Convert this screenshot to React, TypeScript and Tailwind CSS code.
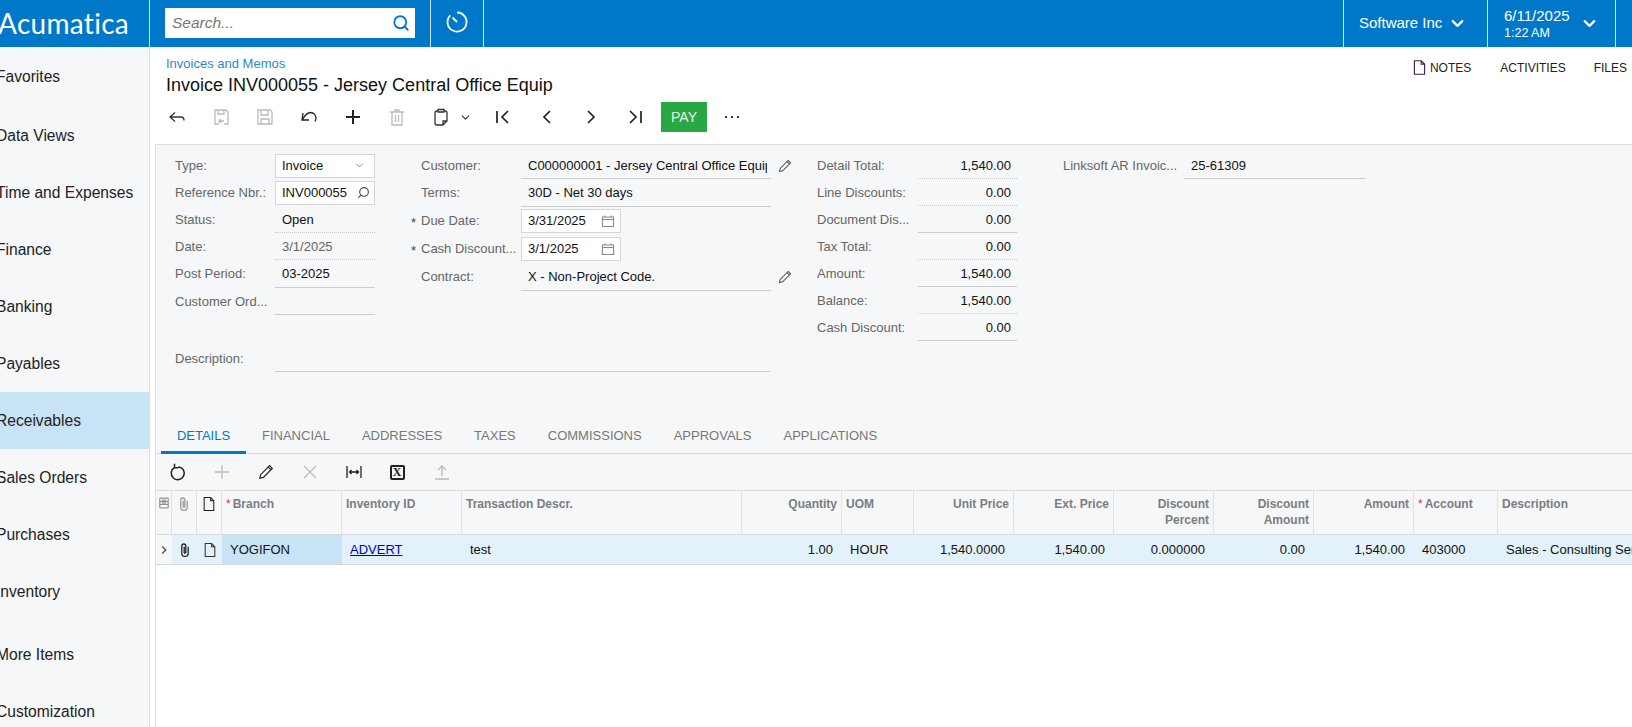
import type { ReactNode } from "react";
import { ChevronDown, Search } from "lucide-react";

const NAV_ITEMS = [
  "Favorites",
  "Data Views",
  "Time and Expenses",
  "Finance",
  "Banking",
  "Payables",
  "Receivables",
  "Sales Orders",
  "Purchases",
  "Inventory",
];

const TABS = ["DETAILS", "FINANCIAL", "ADDRESSES", "TAXES", "COMMISSIONS", "APPROVALS", "APPLICATIONS"];

function Icon({ children, className = "text-[#333]", size = 20 }: { children: ReactNode; className?: string; size?: number }) {
  return (
    <svg width={size} height={size} viewBox="0 0 20 20" fill="none" stroke="currentColor" strokeWidth="1.3" className={className}>
      {children}
    </svg>
  );
}

function ToolButton({ children }: { children: ReactNode }) {
  return <div className="flex h-[30px] w-[44px] shrink-0 items-center justify-center">{children}</div>;
}

function PageIcon({ className = "text-[#222]", size = 16 }: { className?: string; size?: number }) {
  return (
    <Icon className={className} size={size}>
      <path d="M4 2h8l4 4v12H4z M12 2v4h4" />
    </Icon>
  );
}

function ClipIcon({ className }: { className: string }) {
  return (
    <Icon className={className} size={16}>
      <path d="M14 6v8a4 4 0 0 1-8 0V5a2.500 2.500 0 0 1 5 0v8a1 1 0 0 1-2 0V6" strokeWidth="1.6" />
    </Icon>
  );
}

function Pencil({ className = "text-[#555]", size = 16 }: { className?: string; size?: number }) {
  return (
    <Icon className={className} size={size}>
      <path d="M3 17l1-4L14 3l3 3L7 16z M12.500 4.500l3 3" />
    </Icon>
  );
}

function CalendarIcon() {
  return (
    <Icon className="text-[#888]" size={16}>
      <path d="M3 5h14v12H3z M3 8h14 M6 3v2 M14 3v2" />
    </Icon>
  );
}

function Label({ text, star, className = "w-[100px]" }: { text: string; star?: boolean; className?: string }) {
  return (
    <div className={`relative shrink-0 whitespace-nowrap text-[#666] ${className}`}>
      {star && <span className="absolute left-[-10px] top-[2px] text-[#444]">*</span>}
      {text}
    </div>
  );
}

type FieldKind = "box" | "line" | "dots" | "none";

function Value({ children, kind = "line", className = "", right }: { children?: ReactNode; kind?: FieldKind; className?: string; right?: ReactNode }) {
  const kindClass =
    kind === "box"
      ? "h-[24px] border border-[#d4d6d9] bg-white pl-[6px]"
      : kind === "dots"
        ? "h-[27px] border-b border-dotted border-[#c6c9cc] pl-[7px] pt-[1px]"
        : "h-[27px] border-b border-[#c9cccf] pl-[7px] pt-[1px]";
  return (
    <div className={`flex shrink-0 items-center justify-between pr-[4px] text-[#111] ${kindClass} ${className}`}>
      <span className="overflow-hidden whitespace-nowrap">{children}</span>
      {right}
    </div>
  );
}

function Row({ children, className = "h-[27px]" }: { children: ReactNode; className?: string }) {
  return <div className={`flex items-center ${className}`}>{children}</div>;
}

function InvoiceForm() {
  return (
    <div className="flex h-[278px] pl-[19px] pt-[7px] text-[13px]">
      <div className="w-[246px] shrink-0">
        <Row>
          <Label text="Type:" />
          <Value kind="box" className="w-[100px]" right={<ChevronDown size={11} className="mr-[5px] text-[#777]" />}>Invoice</Value>
        </Row>
        <Row>
          <Label text="Reference Nbr.:" />
          <Value kind="box" className="w-[100px]" right={<Search size={13} className="-scale-x-100 text-[#444]" />}>INV000055</Value>
        </Row>
        <Row>
          <Label text="Status:" />
          <Value kind="dots" className="w-[100px]">Open</Value>
        </Row>
        <Row>
          <Label text="Date:" />
          <Value kind="dots" className="w-[100px] text-[#666]">3/1/2025</Value>
        </Row>
        <Row className="h-[28px]">
          <Label text="Post Period:" />
          <Value className="w-[100px]">03-2025</Value>
        </Row>
        <Row>
          <Label text="Customer Ord..." />
          <Value className="w-[100px]" />
        </Row>
        <Row className="mt-[30px] h-[27px] w-[595px]">
          <Label text="Description:" />
          <Value className="w-[495px]" />
        </Row>
      </div>
      <div className="w-[396px] shrink-0">
        <Row>
          <Label text="Customer:" />
          <Value className="w-[250px]">C000000001 - Jersey Central Office Equipment</Value>
          <div className="ml-[6px]"><Pencil /></div>
        </Row>
        <Row className="h-[28px]">
          <Label text="Terms:" />
          <Value className="w-[250px]">30D - Net 30 days</Value>
        </Row>
        <Row>
          <Label text="Due Date:" star />
          <Value kind="box" className="w-[100px]" right={<CalendarIcon />}>3/31/2025</Value>
        </Row>
        <Row className="h-[29px]">
          <Label text="Cash Discount..." star />
          <Value kind="box" className="w-[100px]" right={<CalendarIcon />}>3/1/2025</Value>
        </Row>
        <Row className="h-[28px]">
          <Label text="Contract:" />
          <Value className="w-[250px]">X - Non-Project Code.</Value>
          <div className="ml-[6px]"><Pencil /></div>
        </Row>
      </div>
      <div className="w-[246px] shrink-0">
        {[
          ["Detail Total:", "1,540.00", "dots"],
          ["Line Discounts:", "0.00", "dots"],
          ["Document Dis...", "0.00", "line"],
          ["Tax Total:", "0.00", "dots"],
          ["Amount:", "1,540.00", "line"],
          ["Balance:", "1,540.00", "dots"],
          ["Cash Discount:", "0.00", "line"],
        ].map(([label, value, kind]) => (
          <Row key={label}>
            <Label text={label} className="w-[101px]" />
            <Value kind={kind as FieldKind} className="w-[99px] !justify-end pr-[6px]">{value}</Value>
          </Row>
        ))}
      </div>
      <div className="shrink-0">
        <Row>
          <Label text="Linksoft AR Invoic..." className="w-[121px]" />
          <Value className="w-[181px]">25-61309</Value>
        </Row>
      </div>
    </div>
  );
}

const COLS = [
  "w-[16px]",
  "w-[25px]",
  "w-[25px]",
  "w-[120px]",
  "w-[120px]",
  "w-[280px]",
  "w-[100px]",
  "w-[72px]",
  "w-[100px]",
  "w-[100px]",
  "w-[100px]",
  "w-[100px]",
  "w-[100px]",
  "w-[84px]",
  "w-[220px]",
];

function HeaderCell({ col, children, right, star }: { col: number; children?: ReactNode; right?: boolean; star?: boolean }) {
  return (
    <div className={`${COLS[col]} h-full shrink-0 border-r border-[#dfe1e3] px-[4px] pt-[5px] font-bold leading-[16px] text-[#7b7d80] ${right ? "text-right" : ""}`}>
      {star && <span className="mr-[2px] font-normal text-[#d33]">*</span>}
      {children}
    </div>
  );
}

function Cell({ col, children, right, className = "" }: { col: number; children?: ReactNode; right?: boolean; className?: string }) {
  return (
    <div className={`${COLS[col]} flex h-full shrink-0 items-center overflow-hidden whitespace-nowrap pl-[8px] pr-[9px] text-[13px] text-[#111] ${right ? "justify-end" : ""} ${className}`}>
      {children}
    </div>
  );
}

function DetailsGrid() {
  return (
    <div className="text-[12px]">
      <div className="flex h-[45px] border-y border-[#d9dbdd] bg-[#f5f7f9]">
        <div className={`${COLS[0]} flex h-full shrink-0 justify-center border-r border-[#dfe1e3] pt-[5px]`}>
          <Icon className="text-[#777]" size={14}><path d="M4 3h12v14H4z M4 8h12 M4 12h12 M7 6h6 M7 10h6" /></Icon>
        </div>
        <div className={`${COLS[1]} flex h-full shrink-0 justify-center border-r border-[#dfe1e3] pt-[5px]`}>
          <ClipIcon className="text-[#999]" />
        </div>
        <div className={`${COLS[2]} flex h-full shrink-0 justify-center border-r border-[#dfe1e3] pt-[5px]`}>
          <PageIcon />
        </div>
        <HeaderCell col={3} star>Branch</HeaderCell>
        <HeaderCell col={4}>Inventory ID</HeaderCell>
        <HeaderCell col={5}>Transaction Descr.</HeaderCell>
        <HeaderCell col={6} right>Quantity</HeaderCell>
        <HeaderCell col={7}>UOM</HeaderCell>
        <HeaderCell col={8} right>Unit Price</HeaderCell>
        <HeaderCell col={9} right>Ext. Price</HeaderCell>
        <HeaderCell col={10} right>Discount Percent</HeaderCell>
        <HeaderCell col={11} right>Discount Amount</HeaderCell>
        <HeaderCell col={12} right>Amount</HeaderCell>
        <HeaderCell col={13} star>Account</HeaderCell>
        <HeaderCell col={14}>Description</HeaderCell>
      </div>
      <div className="flex h-[30px] border-b border-[#d5d8da] bg-[#e3f1fa]">
        <div className={`${COLS[0]} flex h-full shrink-0 items-center justify-center bg-[#f5f7f9]`}>
          <Icon className="text-[#555]" size={12}><path d="M7 4l6 6-6 6" strokeWidth="2.400" /></Icon>
        </div>
        <div className={`${COLS[1]} flex h-full shrink-0 items-center justify-center`}>
          <ClipIcon className="text-[#222]" />
        </div>
        <div className={`${COLS[2]} flex h-full shrink-0 items-center justify-center`}>
          <PageIcon className="text-[#333]" />
        </div>
        <Cell col={3} className="bg-[#c9e3f6]">YOGIFON</Cell>
        <Cell col={4}><span className="text-[#0000cc] underline">ADVERT</span></Cell>
        <Cell col={5}>test</Cell>
        <Cell col={6} right>1.00</Cell>
        <Cell col={7}>HOUR</Cell>
        <Cell col={8} right>1,540.0000</Cell>
        <Cell col={9} right>1,540.00</Cell>
        <Cell col={10} right>0.000000</Cell>
        <Cell col={11} right>0.00</Cell>
        <Cell col={12} right>1,540.00</Cell>
        <Cell col={13}>403000</Cell>
        <Cell col={14}>Sales - Consulting Services</Cell>
      </div>
    </div>
  );
}

export default function App() {
  return (
    <div className="flex h-[727px] w-[1632px] flex-col overflow-hidden bg-white font-['Liberation_Sans',Arial,sans-serif] text-[12px]">
      <header className="flex h-[47px] shrink-0 items-stretch bg-[#0078c9] text-white">
        <div className="w-[150px] shrink-0 overflow-hidden border-r border-[#cfe6f6]">
          <div className="-ml-[2px] font-['Lato',sans-serif] text-[28px] leading-[47px] tracking-[0.3px]">Acumatica</div>
        </div>
        <div className="flex w-[281px] shrink-0 items-center border-r border-[#cfe6f6] pb-[1px] pl-[15px]">
          <div className="flex h-[30px] w-[250px] items-center justify-between bg-white pl-[7px] pr-[5px]">
            <span className="text-[15.5px] italic text-[#777]">Search...</span>
            <Search size={18} strokeWidth={2.4} className="text-[#0078c9]" />
          </div>
        </div>
        <div className="flex w-[53px] shrink-0 items-center justify-center border-r border-[#cfe6f6] pb-[3px]">
          <svg width="24" height="24" viewBox="0 0 24 24" fill="none" stroke="currentColor" strokeWidth="1.8">
            <path d="M12 2.500A9.500 9.500 0 1 1 5.300 5.300 M7.500 7.500L12 12" />
          </svg>
        </div>
        <div className="flex-1" />
        <div className="flex w-[145px] shrink-0 items-center border-x border-[#cfe6f6] pl-[15px] text-[15px]">
          Software Inc
          <ChevronDown size={19} strokeWidth={2.8} className="ml-[6px]" />
        </div>
        <div className="flex w-[128px] shrink-0 items-center justify-between border-r border-[#cfe6f6] pl-[16px] pr-[16px]">
          <div>
            <div className="text-[15px] leading-[19px]">6/11/2025</div>
            <div className="mt-[1px] text-[12.5px] leading-[15px]">1:22 AM</div>
          </div>
          <ChevronDown size={19} strokeWidth={2.8} />
        </div>
        <div className="w-[16px] shrink-0" />
      </header>

      <div className="flex min-h-0 flex-1">
        <nav className="w-[150px] shrink-0 overflow-hidden border-r border-[#dcdee0] bg-[#f5f7f9] text-[15.6px] text-[#222]">
          {NAV_ITEMS.map((item, i) => (
            <div
              key={item}
              className={`-ml-[4px] flex items-center whitespace-nowrap ${i === 0 ? "h-[60px] pb-[1px]" : "h-[57px]"} ${item === "Receivables" ? "bg-[#c9e3f6]" : ""}`}
            >
              {item}
            </div>
          ))}
          <div className="-ml-[4px] mt-[6px] flex h-[57px] items-center">More Items</div>
          <div className="-ml-[4px] flex h-[57px] items-center">Customization</div>
        </nav>

        <main className="min-w-0 flex-1 overflow-hidden">
          <div className="flex h-[97px] flex-col">
            <div className="flex justify-between pl-[16px] pr-[5px]">
              <div className="pt-[9px]">
                <div className="text-[13px] leading-[16px] text-[#2a8ac9]">Invoices and Memos</div>
                <div className="mt-[2px] text-[18px] leading-[22px] text-[#111]">Invoice INV000055 - Jersey Central Office Equip</div>
              </div>
              <div className="flex items-center self-start pt-[12px] text-[12px] leading-[14px] text-[#222]">
                <div className="flex items-center gap-[2px]">
                  <PageIcon className="text-[#3a1f4a]" size={17} />
                  NOTES
                </div>
                <div className="ml-[29px]">ACTIVITIES</div>
                <div className="ml-[28px]">FILES</div>
              </div>
            </div>
            <div className="mt-auto mb-[12px] flex items-center pl-[5px]">
              <ToolButton>
                <Icon><path d="M8 5.500L3 10l5 4.500 M3 10h11c2 0 3 1 3 3.500" /></Icon>
              </ToolButton>
              <ToolButton>
                <Icon className="text-[#bbb]"><path d="M8 17H4V3h11l2 2v12h-4 M7 3v4h6V3 M13 14H8l2-2 M8 14l2 2" /></Icon>
              </ToolButton>
              <ToolButton>
                <Icon className="text-[#bbb]"><path d="M3 3h12l2 2v12H3z M6 3v5h7V3 M6 17v-5h8v5" /></Icon>
              </ToolButton>
              <ToolButton>
                <Icon className="text-[#222]"><path d="M4 6l-1 7h7 M3.500 12.500C6 8 8.500 5.500 11.500 5.500c3.500 0 5.500 3 5.500 5.500 0 1.500-.5 2.500-1 3.500" /></Icon>
              </ToolButton>
              <ToolButton>
                <Icon className="text-[#222]"><path d="M10 3v14M3 10h14" strokeWidth="2" /></Icon>
              </ToolButton>
              <ToolButton>
                <Icon className="text-[#bbb]"><path d="M3 5h14 M8 5V3h4v2 M5 5v13h10V5 M8.500 8v7 M11.500 8v7" /></Icon>
              </ToolButton>
              <div className="flex w-[62px] shrink-0 items-center pl-[12px]">
                <Icon><path d="M7 4H6a2 2 0 0 0-2 2v10a2 2 0 0 0 2 2h6l4-4V6a2 2 0 0 0-2-2h-1 M7 2.500h6V5H7z M12 18v-4h4" /></Icon>
                <ChevronDown size={13} strokeWidth={2} className="ml-[8px] text-[#333]" />
              </div>
              <ToolButton>
                <Icon className="text-[#222]"><path d="M4 4v12 M15 4L9 10l6 6" strokeWidth="1.700" /></Icon>
              </ToolButton>
              <ToolButton>
                <Icon className="text-[#222]"><path d="M13 4l-6 6 6 6" strokeWidth="1.700" /></Icon>
              </ToolButton>
              <ToolButton>
                <Icon className="text-[#222]"><path d="M7 4l6 6-6 6" strokeWidth="1.700" /></Icon>
              </ToolButton>
              <ToolButton>
                <Icon className="text-[#222]"><path d="M16 4v12 M5 4l6 6-6 6" strokeWidth="1.700" /></Icon>
              </ToolButton>
              <div className="ml-[4px] flex h-[30px] w-[46px] items-center justify-center bg-[#28a745] text-[14px] text-[#e6f5ea]">PAY</div>
              <div className="ml-[18px] flex gap-[4px]">
                <span className="h-[2px] w-[2px] bg-[#333]" />
                <span className="h-[2px] w-[2px] bg-[#333]" />
                <span className="h-[2px] w-[2px] bg-[#333]" />
              </div>
            </div>
          </div>

          <section className="ml-[5px] h-full border-l border-[#dcdee0]">
            <div className="border-t border-[#dcdee0] bg-[#f5f7f9]">
              <InvoiceForm />
              <div className="flex h-[67px] flex-col">
                <div className="flex h-[31px] items-center border-b border-[#d9dbdd]">
                  {TABS.map((tab, i) => (
                    <div
                      key={tab}
                      className={`-mb-[1px] flex h-[31px] items-center text-[13px] ${
                        i === 0 ? "ml-[5px] w-[85px] justify-center border-b-[3px] border-[#0078c9] pb-[3px] text-[#0078c9]" : "w-auto px-[16px] pb-[6px] text-[#777]"
                      }`}
                    >
                      {tab}
                    </div>
                  ))}
                </div>
                <div className="flex h-[36px] items-center">
                  <ToolButton>
                    <Icon className="text-[#222]"><path d="M6.500 5.500a6.500 6.500 0 1 0 4-.8 M6.500 1.800v4h4" strokeWidth="1.500" /></Icon>
                  </ToolButton>
                  <ToolButton>
                    <Icon className="text-[#bbb]"><path d="M10 3v14M3 10h14" /></Icon>
                  </ToolButton>
                  <ToolButton><Pencil className="text-[#222]" size={18} /></ToolButton>
                  <ToolButton>
                    <Icon className="text-[#bbb]"><path d="M4 4l12 12M16 4L4 16" /></Icon>
                  </ToolButton>
                  <ToolButton>
                    <Icon className="text-[#222]"><path d="M3 4v12 M17 4v12 M5.500 10h9 M7.500 8l-2 2 2 2 M12.500 8l2 2-2 2" /></Icon>
                  </ToolButton>
                  <ToolButton>
                    <div className="-ml-[2px] flex h-[15px] w-[15px] items-center justify-center rounded-[2px] border-2 border-[#222] font-['Liberation_Serif',serif] text-[12px] font-bold leading-none text-[#222]">X</div>
                  </ToolButton>
                  <ToolButton>
                    <Icon className="text-[#bbb]"><path d="M10 14V4 M6 8l4-4 4 4 M3 17h14" /></Icon>
                  </ToolButton>
                </div>
              </div>
            </div>
            <DetailsGrid />
          </section>
        </main>
      </div>
    </div>
  );
}
